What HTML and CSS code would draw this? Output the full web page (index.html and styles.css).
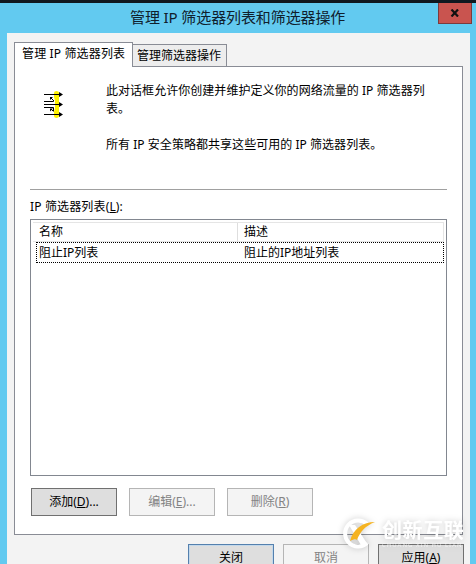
FILE: index.html
```
<!DOCTYPE html>
<html lang="zh-CN">
<head>
    <meta charset="utf-8">
    <title>管理 IP 筛选器列表和筛选器操作</title>
    <link rel="stylesheet" href="styles.css">
</head>
<body>
    <div class="window">
        <div class="titlebar">
            <div class="title">管理 IP 筛选器列表和筛选器操作</div>
            <div class="close">
                <svg width="10" height="8" viewBox="0 0 10 8"><path d="M1.5 0.5L8 7.5M8 0.5L1.5 7.5" stroke="#111" stroke-width="2.2"/></svg>
            </div>
        </div>

        <div class="client">
            <div class="tabs">
                <div class="tab active">管理 IP 筛选器列表</div>
                <div class="tab">管理筛选器操作</div>
            </div>

            <div class="page">
                <div class="intro">
                    <svg class="icon" width="22" height="30" viewBox="0 0 22 30">
                        <path d="M11 4Q11 2 13.5 2T16 4V27Q16 29 13.5 29T11 27V23L12 19V12L11 8Z" fill="#fff200"/>
                        <path d="M1 5.5H17M1 12.5H10.5V11M1 15.5H17M1 18.5H10.5V22M1 25.5H17M8 9L10.5 11.5M8 20L10.5 22.5" fill="none" stroke="#000"/>
                        <path d="M16 3L20 5.5L16 8ZM16 13L20 15.5L16 18ZM16 23L20 25.5L16 28ZM7 8H10L7 11ZM7 19.5H10L7 22.5Z" fill="#000"/>
                    </svg>
                    <div class="intro_text">
                        <p>此对话框允许你创建并维护定义你的网络流量的 IP 筛选器列<br>表。</p>
                        <p>所有 IP 安全策略都共享这些可用的 IP 筛选器列表。</p>
                    </div>
                </div>

                <div class="list_label">IP 筛选器列表(<u>L</u>):</div>
                <div class="list">
                    <div class="list_head">
                        <div class="col_name">名称</div>
                        <div class="col_desc">描述</div>
                    </div>
                    <div class="list_row">
                        <div class="col_name">阻止IP列表</div>
                        <div class="col_desc">阻止的IP地址列表</div>
                    </div>
                </div>

                <div class="list_buttons">
                    <div class="button">添加(<u>D</u>)...</div>
                    <div class="button disabled">编辑(<u>E</u>)...</div>
                    <div class="button disabled">删除(<u>R</u>)</div>
                </div>
            </div>

            <div class="dialog_buttons">
                <div class="button default">关闭</div>
                <div class="button disabled">取消</div>
                <div class="button">应用(<u>A</u>)</div>
            </div>
        </div>
    </div>

    <div class="watermark">
        <svg width="36" height="34" viewBox="0 0 36 34">
            <path d="M27 7A13 13 0 1 0 27 26" fill="none" stroke="#fff" stroke-width="4"/>
            <path d="M9 8H15L28 28H21Z" fill="#fff"/>
            <path d="M35 5C23 5 13 12 10 24C14 22 16 22 17 23C20 15 25 9 35 5Z" fill="#f5b321"/>
        </svg>
        <div class="brand">
            <div class="brand_name">创新互联</div>
            <div class="brand_sub">CHUANG XIN HU LIAN</div>
        </div>
    </div>
</body>
</html>
```

FILE: styles.css
```
* {
    box-sizing: border-box;
}

body {
    margin: 0;
    font-family: "Noto Sans", "Noto Sans CJK SC", sans-serif;
    font-size: 12px;
    line-height: 18px;
    color: #000;
    overflow: hidden;
}

.window {
    height: 564px;
    padding: 0 6px 0 7px;
    background-color: #62caf0;
    border-top: 3px solid #101820;
    overflow: hidden;
}

.titlebar {
    position: relative;
    height: 30px;
    padding-top: 4px;
}

.title {
    padding-left: 123px;
    font-size: 15px;
    line-height: 20px;
    letter-spacing: -0.1px;
    color: #10202c;
    white-space: nowrap;
}

.close {
    position: absolute;
    top: 0;
    right: -2px;
    width: 34px;
    height: 21px;
    display: flex;
    align-items: center;
    justify-content: center;
    background-color: #c9544f;
    border: 1px solid #7d3a3c;
    border-top: 0;
}

.client {
    height: 531px;
    padding: 9px 7px 0;
    background-color: #f3f3f3;
}

.tabs {
    display: flex;
    align-items: flex-end;
    height: 25px;
}

.tab {
    width: 94px;
    height: 23px;
    padding-left: 4px;
    border: 1px solid #898c95;
    border-left: 0;
    background-color: #ededed;
    line-height: 21px;
    white-space: nowrap;
}

.tab.active {
    width: 119px;
    height: 25px;
    padding-left: 7px;
    border-left: 1px solid #898c95;
    border-bottom: 0;
    background-color: #fff;
    letter-spacing: 0.15px;
    z-index: 1;
}

.page {
    height: 469px;
    margin-top: -1px;
    padding: 15px 15px 0;
    border: 1px solid #898c95;
    background-color: #fff;
}

.intro {
    display: flex;
    height: 108px;
    border-bottom: 1px solid #a0a0a0;
}

.icon {
    margin: 7px 0 0 13px;
}

.intro_text {
    margin-left: 41px;
    letter-spacing: 0.04px;
    white-space: nowrap;
}

.intro_text p {
    margin: 0 0 18px;
}

.list_label {
    margin: 8px 0 3px;
    height: 18px;
    letter-spacing: 0.15px;
}

.list {
    height: 257px;
    padding: 2px;
    border: 1px solid #828790;
}

.list_head {
    display: flex;
    height: 20px;
    border: 1px solid #e5e5e5;
    border-width: 1px 1px 1px 0;
}

.list_head .col_name {
    padding-left: 6px;
    border-right: 1px solid #dedede;
}

.list_row {
    display: flex;
    height: 21px;
    margin-left: 3px;
    border: 1px dotted #000;
    line-height: 19px;
}

.col_name {
    width: 205px;
    padding-left: 2px;
}

.list_row .col_name {
    width: 201px;
}

.col_desc {
    padding-left: 6px;
}

.list_buttons {
    display: flex;
    gap: 12px;
    margin: 12px 0 0 1px;
}

.button {
    width: 86px;
    height: 28px;
    border: 1px solid #707070;
    background-color: #dedede;
    line-height: 26px;
    text-align: center;
}

.button.disabled {
    border-color: #b5b5b5;
    background-color: #f4f4f4;
    color: #838383;
}

.button.default {
    border-color: #5480ae;
    box-shadow: inset 0 0 0 1px #c3d8ea;
}

.dialog_buttons {
    display: flex;
    justify-content: flex-end;
    gap: 9px;
    margin: 9px -1px 0 0;
}

.watermark {
    position: absolute;
    left: 340px;
    top: 517px;
    display: flex;
    color: #fff;
    filter: drop-shadow(0 0 3px rgba(0, 0, 0, 0.2));
}

.brand {
    width: 92px;
    padding: 3px 0 0 6px;
    white-space: nowrap;
}

.brand_name {
    font-size: 20px;
    font-weight: bold;
    line-height: 22px;
    letter-spacing: 0.6px;
}

.brand_sub {
    font-size: 6px;
    line-height: 6px;
    letter-spacing: 1px;
    opacity: 0.6;
}
```
